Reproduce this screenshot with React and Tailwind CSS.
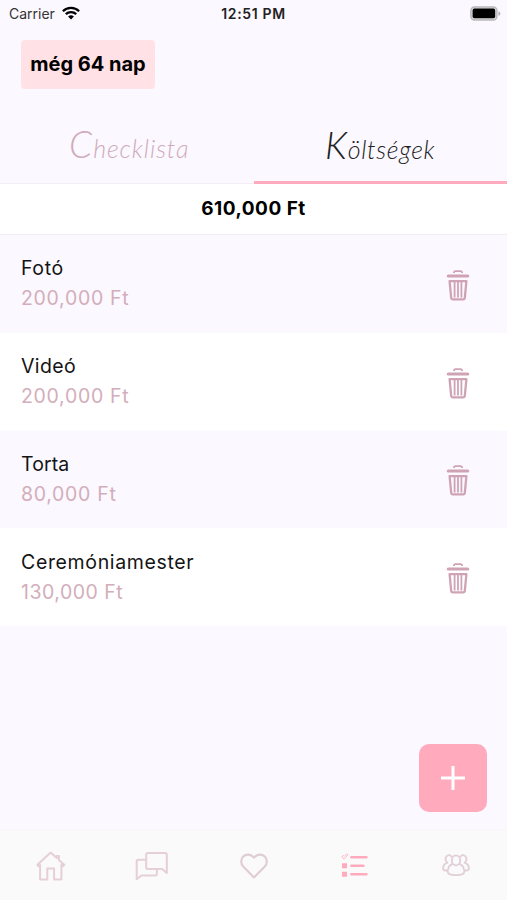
import React from "react";

const expenses = [
  { name: "Fotó", price: "200,000 Ft", nameClass: "tracking-[0.6px]", priceClass: "tracking-[0.7px]" },
  { name: "Videó", price: "200,000 Ft", nameClass: "tracking-[0.4px]", priceClass: "tracking-[0.7px]" },
  { name: "Torta", price: "80,000 Ft", nameClass: "tracking-[0.1px]", priceClass: "tracking-[0.7px]" },
  { name: "Ceremóniamester", price: "130,000 Ft", nameClass: "tracking-[0.65px]", priceClass: "tracking-[0.5px]" },
];

function WifiIcon() {
  return (
    <svg width="18" height="14" viewBox="0 0 18 14" fill="none" stroke="#000" strokeWidth="2.3">
      <path d="M0.9 5.2a11.6 11.6 0 0 1 16.2 0" />
      <path d="M3.8 8.2a7.5 7.5 0 0 1 10.4 0" />
      <path d="M9 13.6 6.1 10.6a4.1 4.1 0 0 1 5.8 0Z" fill="#000" stroke="none" />
    </svg>
  );
}

function BatteryIcon() {
  return (
    <svg width="31" height="15" viewBox="0 0 31 15">
      <rect x="0.9" y="0.9" width="26" height="13" rx="3.6" fill="#ddd" stroke="#b8b8ba" strokeWidth="1.5" />
      <rect x="2.6" y="2.6" width="22.6" height="9.6" rx="1.8" fill="#000" />
      <path d="M28.5 5.2c2.4.8 2.4 3.8 0 4.6Z" fill="#adadb0" />
    </svg>
  );
}

function TrashIcon() {
  return (
    <svg width="24" height="31" viewBox="0 0 24 31" fill="none" stroke="#d0a3b4">
      <path d="M8 3V2.2Q8.2 1.2 9.4 1.2h5.2q1.2 0 1.4 1V3" strokeWidth="1.8" />
      <path d="M2.3 6h19.4" strokeWidth="3.2" strokeLinecap="round" />
      <path d="M3.6 11.2h16.8L18.8 28q-.1 1.3-1.3 1.3h-11q-1.2 0-1.3-1.3Z" strokeWidth="2.3" strokeLinejoin="round" />
      <path d="M8.6 12v15.4M12 12v15.4M15.4 12v15.4" strokeWidth="1.8" />
    </svg>
  );
}

function HomeIcon() {
  return (
    <svg width="30" height="30" viewBox="0 0 30 30" fill="none" stroke="#e6cfd8" strokeWidth="2" strokeLinejoin="round">
      <path d="M4.1 13.8 2.3 15.2 1.4 13.8 14.7 1.5l6 5.5V5h2.2v4l5.4 4.8-1.1 1.4-1.8-1.4v14.7h-7.3V17.6h-6.8v10.9H4.1Z" />
    </svg>
  );
}

function ChatIcon() {
  return (
    <svg width="34" height="30" viewBox="0 0 34 30" fill="none" stroke="#e6cfd8" strokeWidth="2" strokeLinejoin="round">
      <path d="M13 2h17q1.8 0 1.8 1.8V22l-4.6-4H13q-1.8 0-1.8-1.8V3.8Q11.2 2 13 2Z" />
      <path d="M11 8.7H3.4q-1.7 0-1.7 1.7v17.9l4.7-3.8h13.8q1.7 0 1.7-1.8v-4.4" />
    </svg>
  );
}

function HeartIcon() {
  return (
    <svg width="28" height="26" viewBox="0 0 28 26" fill="none" stroke="#dfccd5" strokeWidth="2.1" strokeLinejoin="round">
      <path d="M14 24.4 3.2 13.4C.5 10.6.6 6.2 3.2 3.6c2.9-2.9 7.6-2.7 10.8 1 3.2-3.7 7.9-3.9 10.8-1 2.6 2.6 2.7 7 0 9.8Z" />
    </svg>
  );
}

function ListIcon() {
  return (
    <svg width="28" height="25" viewBox="0 0 28 25" fill="none" stroke="#ffabbd">
      <path d="M10.4 4.3h15M10.4 12.8h12M10.4 21.3h15" strokeWidth="2.6" strokeLinecap="round" />
      <path d="M1 10.2h5v5H1ZM1 18.8h5v5H1Z" fill="#ffabbd" stroke="none" />
      <path d="m.8 3.6 1.5-1.1 1.2.7L6 .8l1.1 1-4 4.4Z" strokeWidth=".8" />
    </svg>
  );
}

function PeopleIcon() {
  return (
    <svg width="28" height="23" viewBox="0 0 28 23" fill="none" stroke="#e1ced7" strokeWidth="1.8" strokeLinejoin="round">
      <ellipse cx="14" cy="6.4" rx="4.2" ry="5" />
      <path d="M10.7 9.9c-3.8 1.4-4.9 4.3-5 7.6 0 2.3 3.4 3.7 8.3 3.7s8.3-1.4 8.3-3.7c-.1-3.3-1.2-6.2-5-7.6" />
      <path d="M9.8 3C8.7.8 5.8.5 4.4 2.5c-1.3 2-.7 4.7.9 6.2-2.6.9-4 2.8-4.3 5.6-.2 1.7 2 2.5 4.7 2.4M18.2 3c1.1-2.2 4-2.5 5.4-.5 1.3 2 .7 4.7-.9 6.2 2.6.9 4 2.8 4.3 5.6.2 1.7-2 2.5-4.7 2.4" />
    </svg>
  );
}

function ExpenseRow({ item, white }) {
  return (
    <li className={`flex h-[97.8px] items-center justify-between pl-[21px] pr-[37px] ${white ? "bg-white" : "bg-[#fbf8ff]"}`}>
      <div className="pb-px text-[19.5px] leading-[30px]">
        <p className={`text-[#141414] ${item.nameClass}`}>{item.name}</p>
        <p className={`text-[#d3aeba] ${item.priceClass}`}>{item.price}</p>
      </div>
      <button aria-label="Törlés" className="pt-[3px]"><TrashIcon /></button>
    </li>
  );
}

export default function App() {
  return (
    <div className="relative flex h-[900px] w-[507px] flex-col overflow-hidden bg-[#fbf8ff] font-['Inter','Noto_Sans',sans-serif] text-black">
      <div className="grid h-7 grid-cols-3 items-center pb-[2px] pl-[9px] pr-[6px] text-[14px]">
        <div className="flex items-center gap-[7px] text-[#333]">
          <span>Carrier</span>
          <WifiIcon />
        </div>
        <span className="whitespace-nowrap pr-[3px] text-center text-[14px] font-semibold tracking-[0.65px] text-[#222]">12:51 PM</span>
        <div className="flex justify-end"><BatteryIcon /></div>
      </div>

      <div className="flex h-[83px] items-start pl-[21px] pt-3">
        <div className="flex h-[49px] w-[134px] items-center justify-center whitespace-nowrap rounded-[4px] bg-[#ffe1e6] pb-px text-[20px] font-bold">
          még 64 nap
        </div>
      </div>

      <div className="grid h-[73px] grid-cols-2 font-['Lato','Open_Sans',sans-serif] text-[25px] font-light italic leading-none">
        <button className="flex items-center justify-center border-b border-[#f5edf4] pb-[7px] pl-[5px] tracking-[0.9px] text-[#cfabba]">
          <span><span className="text-[37px]">C</span>hecklista</span>
        </button>
        <button className="flex items-center justify-center border-b-[3px] border-[#ffabbd] pb-[3px] tracking-[0.7px] text-[#222]">
          <span><span className="text-[37px]">K</span>öltségek</span>
        </button>
      </div>

      <div className="flex h-[51px] items-center justify-center border-b border-[#f5edf4] bg-white text-[19px] font-bold tracking-[0.5px]">
        610,000 Ft
      </div>

      <ul>
        {expenses.map((item, index) => (
          <ExpenseRow key={item.name} item={item} white={index % 2 === 1} />
        ))}
      </ul>

      <button aria-label="Hozzáadás" className="absolute left-[419px] top-[744px] flex size-[68px] items-center justify-center rounded-[10px] bg-[#ffabbd]">
        <svg width="24" height="24" viewBox="0 0 24 24" stroke="#fff" strokeWidth="3">
          <path d="M12 0v24M0 12h24" />
        </svg>
      </button>

      <nav className="mt-auto grid h-[71px] grid-cols-5 border-t border-[#f8f6fa] bg-[#fafafa] pt-px">
        <div className="flex items-center justify-center pl-px"><HomeIcon /></div>
        <div className="flex items-center justify-center"><ChatIcon /></div>
        <div className="flex items-center justify-center pl-px"><HeartIcon /></div>
        <div className="flex items-center justify-center"><ListIcon /></div>
        <div className="flex items-center justify-center"><PeopleIcon /></div>
      </nav>
    </div>
  );
}
